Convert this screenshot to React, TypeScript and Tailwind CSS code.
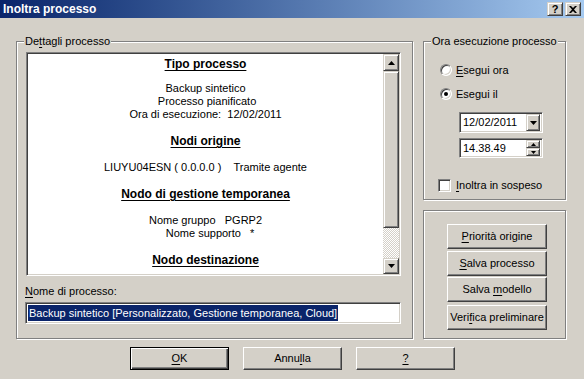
import React from 'react';

const raised =
  'border border-t-white border-l-white border-r-[#404040] border-b-[#404040] shadow-[inset_-1px_-1px_0_#808080]';
const raisedThin =
  'border border-t-[#d4d0c8] border-l-[#d4d0c8] border-r-[#404040] border-b-[#404040] shadow-[inset_1px_1px_0_#fff,inset_-1px_-1px_0_#808080]';
const sunken =
  'border border-t-[#808080] border-l-[#808080] border-r-white border-b-white shadow-[inset_1px_1px_0_#404040,inset_-1px_-1px_0_#d4d0c8]';
const etched = 'border border-[#808080] shadow-[inset_1px_1px_0_#fff,1px_1px_0_#fff]';

function U({ children }: { children: React.ReactNode }) {
  return <span className="underline underline-offset-[2px]">{children}</span>;
}

function Arrow({ up = false, small = false }: { up?: boolean; small?: boolean }) {
  const w = small ? 5 : 7;
  const h = small ? 3 : 4;
  return (
    <svg width={w} height={h} viewBox={`0 0 ${w} ${h}`} className="block">
      <polygon
        points={up ? `0,${h} ${w},${h} ${w / 2},0` : `0,0 ${w},0 ${w / 2},${h}`}
        fill="#000"
      />
    </svg>
  );
}

function TitleBar() {
  return (
    <div className="flex h-[18px] items-center bg-gradient-to-r from-[#0a246a] to-[#a6caf0] pl-[3px] pr-[3px]">
      <span className="flex-1 text-[12px] font-bold leading-[14px] text-white">Inoltra processo</span>
      <div className="flex gap-[2px]">
        <div className={`flex h-[14px] w-[16px] items-center justify-center bg-[#d4d0c8] ${raisedThin}`}>
          <span className="text-[11px] font-bold leading-[11px]">?</span>
        </div>
        <div className={`flex h-[14px] w-[16px] items-center justify-center bg-[#d4d0c8] ${raisedThin}`}>
          <svg width="8" height="7" viewBox="0 0 8 7">
            <path d="M0 0h2l2 2 2-2h2L5 3.5 8 7H6L4 5 2 7H0l3-3.5z" fill="#000" />
          </svg>
        </div>
      </div>
    </div>
  );
}

function GroupLabel({ children }: { children: React.ReactNode }) {
  return (
    <span className="absolute -top-[7px] left-[7px] bg-[#d4d0c8] px-[1px] leading-[13px]">{children}</span>
  );
}

function Header({ children, first = false }: { children: React.ReactNode; first?: boolean }) {
  return (
    <p className={`${first ? '' : 'mt-[14px]'} text-[12px] font-bold leading-[13px] underline underline-offset-[2px]`}>
      {children}
    </p>
  );
}

function Line({ children, className = '' }: { children: React.ReactNode; className?: string }) {
  return <p className={`whitespace-pre leading-[13px] ${className}`}>{children}</p>;
}

function ListBox() {
  return (
    <div className={`ml-[1px] flex h-[224px] w-[375px] bg-white p-[1px] ${sunken}`}>
      <div className="flex-1 pt-[4px] text-center">
        <Header first>Tipo processo</Header>
        <Line className="mt-[11px]">Backup sintetico</Line>
        <Line> Processo pianificato</Line>
        <Line>Ora di esecuzione:  12/02/2011</Line>
        <Header>Nodi origine</Header>
        <Line className="mt-[13px]">LIUYU04ESN ( 0.0.0.0 )    Tramite agente</Line>
        <Header>Nodo di gestione temporanea</Header>
        <Line className="mt-[13px]">Nome gruppo   PGRP2</Line>
        <Line>   Nome supporto   *</Line>
        <Header>Nodo destinazione</Header>
      </div>
      <div className="flex w-[16px] flex-col">
        <div className={`flex h-[17px] items-center justify-center bg-[#d4d0c8] ${raisedThin}`}>
          <Arrow up />
        </div>
        <div className={`h-[157px] bg-[#d4d0c8] ${raisedThin}`} />
        <div className="h-[30px] bg-[conic-gradient(#fff_25%,#d4d0c8_0_50%,#fff_0_75%,#d4d0c8_0)] bg-size-[2px_2px]" />
        <div className={`flex h-[16px] items-center justify-center bg-[#d4d0c8] ${raisedThin}`}>
          <Arrow />
        </div>
      </div>
    </div>
  );
}

function Radio({ checked = false }: { checked?: boolean }) {
  return (
    <div className="flex h-[12px] w-[12px] items-center justify-center rounded-full border border-t-[#808080] border-l-[#808080] border-r-white border-b-white bg-white shadow-[inset_1px_1px_0_#404040,inset_-1px_-1px_0_#d4d0c8]">
      {checked && <div className="h-[4px] w-[4px] rounded-full bg-black" />}
    </div>
  );
}

function SideButton({ children, className = '' }: { children: React.ReactNode; className?: string }) {
  return (
    <div className={`flex h-[25px] w-[100px] items-center justify-center bg-[#d4d0c8] ${raised} ${className}`}>
      {children}
    </div>
  );
}

export default function App() {
  return (
    <div className="h-[379px] w-[584px] overflow-hidden bg-[#d4d0c8] font-['Liberation_Sans',Arial,sans-serif] text-[11px] leading-[13px] text-black">
      <TitleBar />

      <div className="flex pl-[16px] pt-[23px]">
        {/* Dettagli processo */}
        <div className={`relative h-[298px] w-[397px] pl-[8px] pt-[10px] ${etched}`}>
          <GroupLabel>
            De<U>t</U>tagli processo
          </GroupLabel>
          <ListBox />
          <p className="mt-[9px] leading-[13px]">
            <U>N</U>ome di processo:
          </p>
          <div className={`mt-[4px] flex h-[22px] w-[376px] items-center bg-white pl-[2px] ${sunken}`}>
            <span className="bg-[#0a246a] px-[1px] leading-[16px] whitespace-pre text-white">
              Backup sintetico [Personalizzato, Gestione temporanea, Cloud]
            </span>
          </div>
        </div>

        <div className="ml-[10px] flex flex-col">
          {/* Ora esecuzione processo */}
          <div className={`relative h-[159px] w-[143px] pt-[22px] ${etched}`}>
            <GroupLabel>Ora esecuzione processo</GroupLabel>
            <div className="flex h-[12px] items-center gap-[4px] pl-[16px]">
              <Radio />
              <span>
                <U>E</U>segui ora
              </span>
            </div>
            <div className="mt-[12px] flex h-[12px] items-center gap-[4px] pl-[16px]">
              <Radio checked />
              <span>Esegui il</span>
            </div>
            <div className={`ml-[35px] mt-[12px] flex h-[21px] w-[84px] items-center bg-white pl-[3px] pr-[2px] ${sunken}`}>
              <span className="flex-1">12/02/2011</span>
              <div className={`flex h-[17px] w-[14px] items-center justify-center bg-[#d4d0c8] ${raisedThin}`}>
                <Arrow />
              </div>
            </div>
            <div className={`ml-[35px] mt-[5px] flex h-[20px] w-[84px] items-center bg-white pl-[3px] pr-[2px] ${sunken}`}>
              <span className="flex-1">14.38.49</span>
              <div className="flex w-[14px] flex-col">
                <div className={`flex h-[8px] items-center justify-center bg-[#d4d0c8] ${raisedThin}`}>
                  <Arrow up small />
                </div>
                <div className={`flex h-[8px] items-center justify-center bg-[#d4d0c8] ${raisedThin}`}>
                  <Arrow small />
                </div>
              </div>
            </div>
            <div className="ml-[14px] mt-[21px] flex items-center gap-[5px]">
              <div className={`h-[13px] w-[13px] bg-white ${sunken}`} />
              <span>
                <U>I</U>noltra in sospeso
              </span>
            </div>
          </div>

          {/* Azioni */}
          <div className={`mt-[10px] h-[129px] w-[143px] pl-[23px] pt-[13px] ${etched}`}>
            <SideButton>
              <span>
                <U>P</U>riorità origine
              </span>
            </SideButton>
            <SideButton className="mt-[2px]">
              <span>
                <U>S</U>alva processo
              </span>
            </SideButton>
            <SideButton className="mt-[1px]">
              <span>
                Salva <U>m</U>odello
              </span>
            </SideButton>
            <SideButton className="mt-[3px]">
              <span>
                Veri<U>f</U>ica preliminare
              </span>
            </SideButton>
          </div>
        </div>
      </div>

      <div className="mt-[8px] flex gap-[14px] pl-[130px]">
        <div className="flex h-[23px] w-[99px] items-center justify-center border border-black bg-[#d4d0c8] shadow-[inset_1px_1px_0_#fff,inset_-1px_-1px_0_#404040,inset_-2px_-2px_0_#808080]">
          <U>O</U>K
        </div>
        <div className={`flex h-[23px] w-[99px] items-center justify-center bg-[#d4d0c8] ${raised}`}>
          <span>
            Annu<U>l</U>la
          </span>
        </div>
        <div className={`flex h-[23px] w-[99px] items-center justify-center bg-[#d4d0c8] ${raised}`}>
          <U>?</U>
        </div>
      </div>
    </div>
  );
}
